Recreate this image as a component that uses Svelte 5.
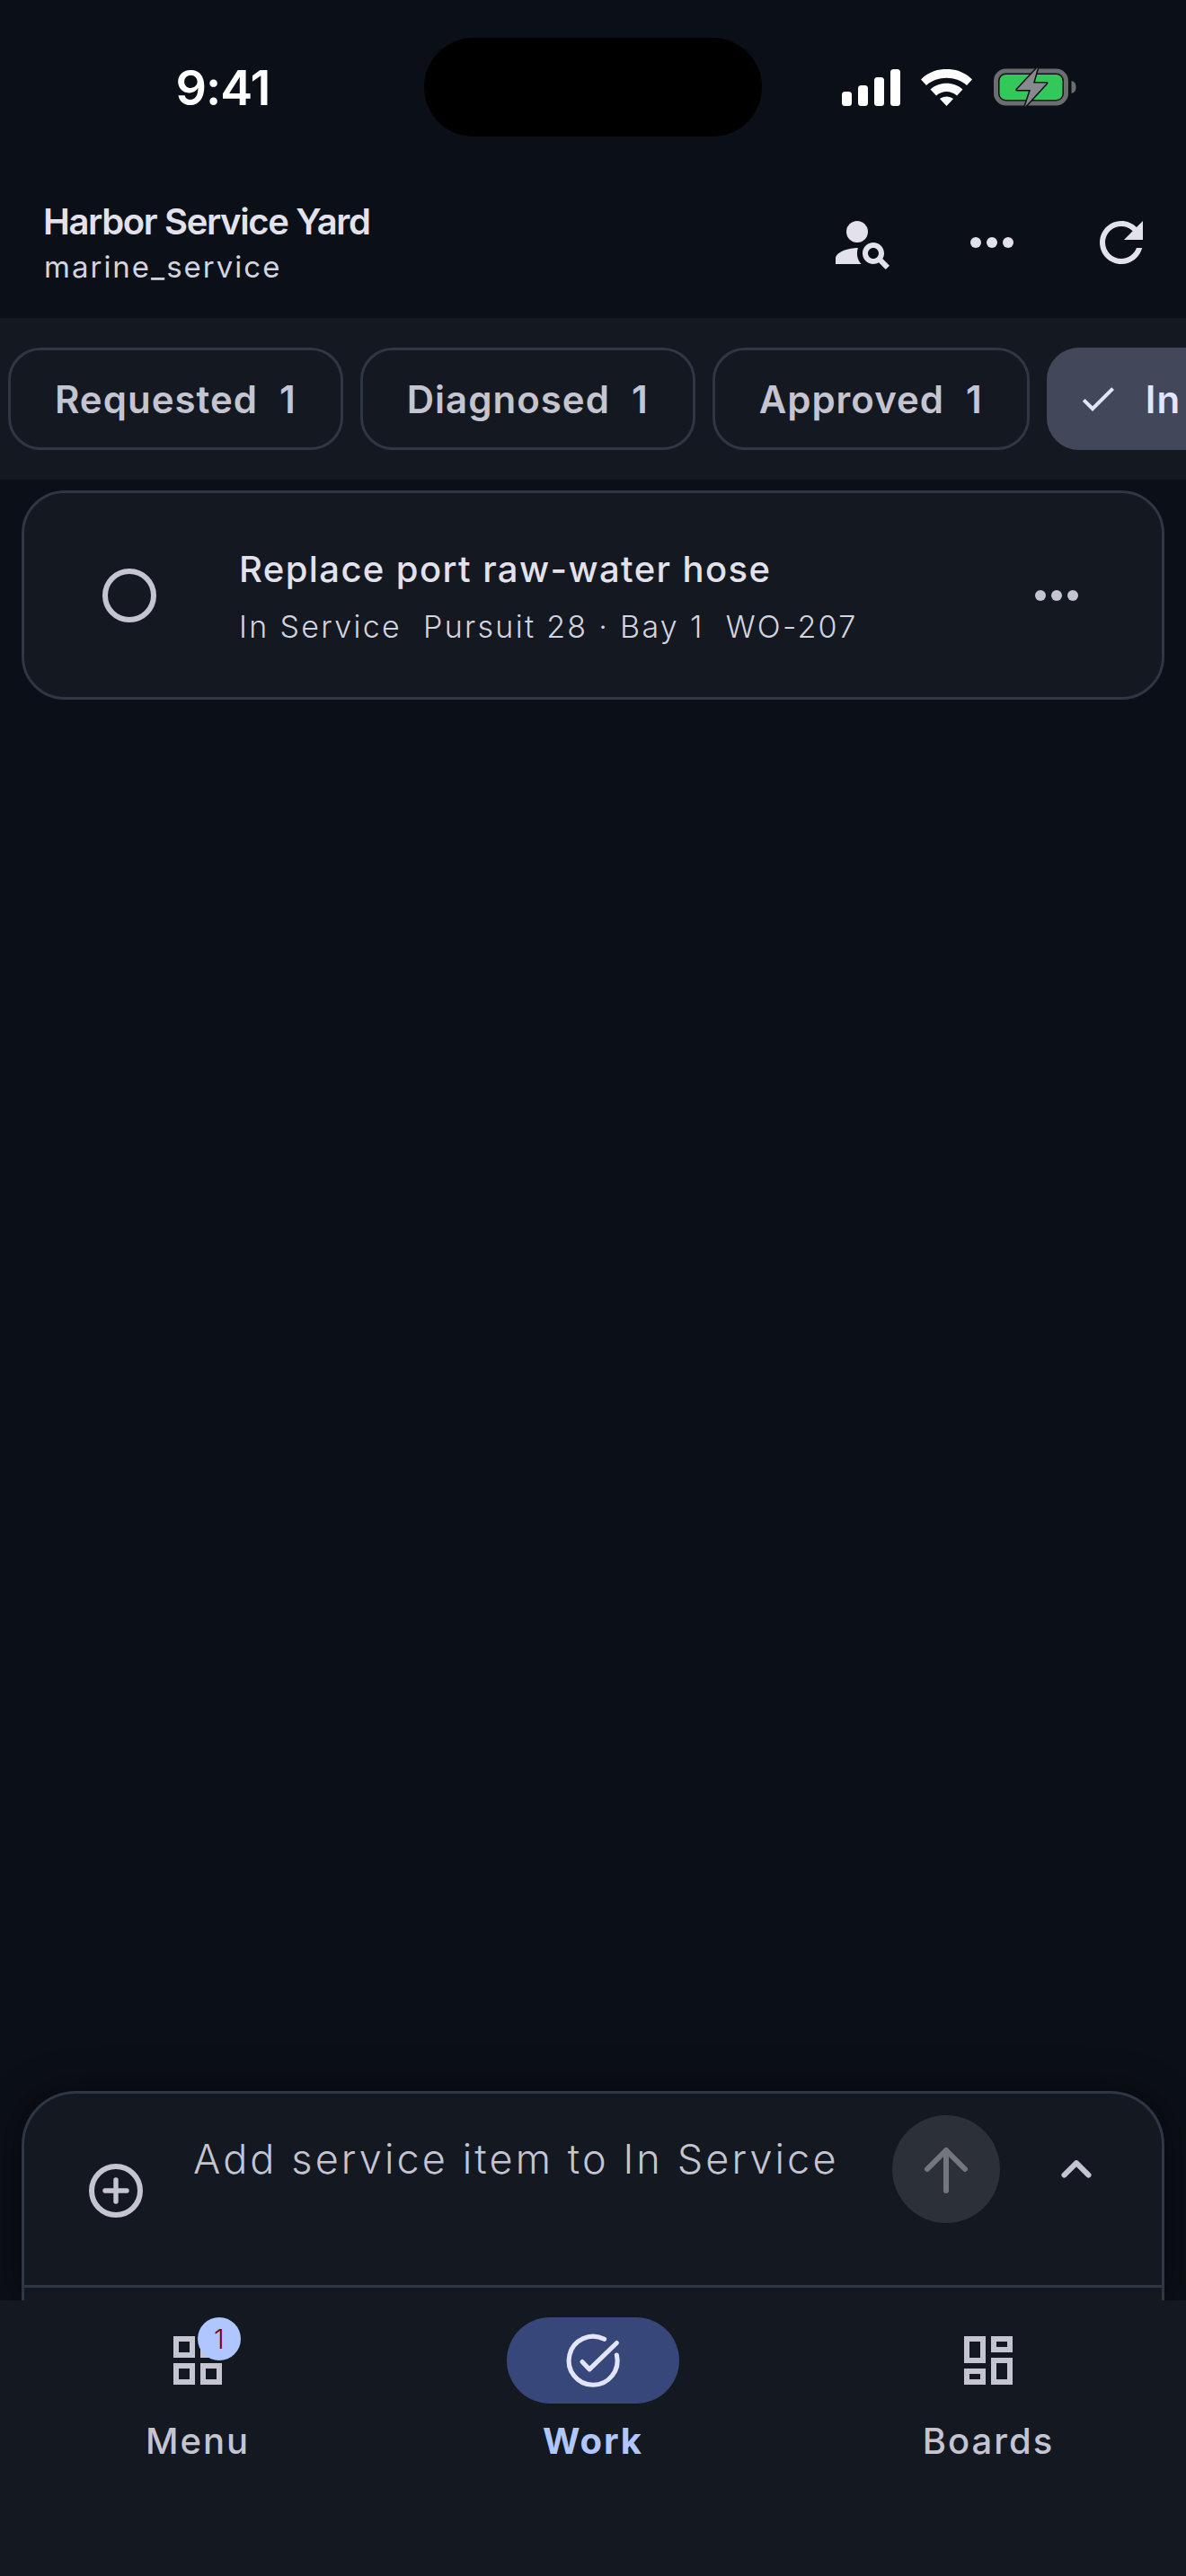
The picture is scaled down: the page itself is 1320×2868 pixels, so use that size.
<script>
  const tabs = [
    { label: 'Requested', count: 1 },
    { label: 'Diagnosed', count: 1 },
    { label: 'Approved', count: 1 },
    { label: 'In Service', count: 1, active: true }
  ];
</script>

<div class="page">
  <header class="top">
    <div class="status">
      <span class="time">9:41</span>
      <div class="island"></div>
      <div class="sys">
        <svg class="signal" width="65" height="41" viewBox="0 0 65 41" fill="#fff">
          <rect x="0" y="25" width="11" height="16" rx="3.5" />
          <rect x="18" y="18" width="11" height="23" rx="3.5" />
          <rect x="36" y="9" width="11" height="32" rx="3.5" />
          <rect x="54" y="0" width="11" height="41" rx="3.5" />
        </svg>
        <svg class="wifi" width="57" height="41" viewBox="0 0 57 41" fill="#fff">
          <path d="M0 11.5C15-4 42-4 57 11.5L51 18C39 7 18 7 6 18Z" />
          <path d="M10.5 22.5C20 13.5 37 13.5 46.5 22.5L40 29.5C33.5 23.5 23.5 23.5 17 29.5Z" />
          <path d="M21 33C25 29.5 32 29.5 36 33L28.5 41Z" />
        </svg>
        <svg class="battery" width="92" height="50" viewBox="0 0 92 50">
          <rect x="2.5" y="7" width="78" height="36" rx="11" fill="none" stroke="#6b6d71" stroke-width="5" />
          <rect x="6.500" y="11" width="70" height="28" rx="7" fill="#34c759" />
          <path d="M86.500 18c4 1 5 3.500 5 7s-1 6-5 7Z" fill="#6b6d71" />
          <path d="M49 3 25.700 28H41L34.700 47 59 20.500H44Z" fill="#88898c" stroke="#0b0f17" stroke-width="3" stroke-linejoin="round" paint-order="stroke" />
        </svg>
      </div>
    </div>
    <div class="appbar">
      <div class="titles">
        <div class="title">Harbor Service Yard</div>
        <div class="sub">marine_service</div>
      </div>
      <div class="actions">
        <button aria-label="Find person">
          <svg width="72" height="72" viewBox="0 0 24 24" fill="#e3e2ec">
            <circle cx="10" cy="8" r="4" />
            <path d="M10.350 14.010C7.620 13.910 2 15.270 2 18v2h9.540c-2.470-2.760-1.230-5.970-1.190-5.990z" />
            <path d="M19.430 18.020c.36-.59.57-1.280.57-2.020 0-2.210-1.790-4-4-4s-4 1.790-4 4 1.790 4 4 4c.74 0 1.430-.22 2.020-.57L20.590 22 22 20.590l-2.570-2.570zM16 18c-1.100 0-2-.9-2-2s.9-2 2-2 2 .9 2 2-.9 2-2 2z" />
          </svg>
        </button>
        <button aria-label="More">
          <svg width="72" height="72" viewBox="0 0 24 24" fill="#e3e2ec">
            <circle cx="6" cy="12" r="2" /><circle cx="12" cy="12" r="2" /><circle cx="18" cy="12" r="2" />
          </svg>
        </button>
        <button aria-label="Refresh">
          <svg width="72" height="72" viewBox="0 0 24 24" fill="#e3e2ec">
            <path d="M17.650 6.350C16.200 4.900 14.210 4 12 4c-4.420 0-7.990 3.580-7.990 8s3.570 8 7.990 8c3.730 0 6.840-2.550 7.730-6h-2.080c-.82 2.330-3.040 4-5.650 4-3.310 0-6-2.690-6-6s2.690-6 6-6c1.660 0 3.140.69 4.220 1.780L13 11h7V4l-2.350 2.350z" />
          </svg>
        </button>
      </div>
    </div>
  </header>

  <nav class="tabs">
    {#each tabs as t}
      <div class="tab" class:active={t.active}>
        {#if t.active}
          <svg class="check" width="48" height="48" viewBox="0 0 24 24" fill="#e3e5ff">
            <path d="M9 16.170 4.830 12l-1.420 1.410L9 19 21 7l-1.410-1.410z" />
          </svg>
        {/if}
        <span>{t.label}</span><span class="count">{t.count}</span>
      </div>
    {/each}
  </nav>

  <main class="list">
    <article class="card">
      <div class="radio"></div>
      <div class="body">
        <div class="ctitle">Replace port raw-water hose</div>
        <div class="meta"><span>In Service</span><span>Pursuit 28 · Bay 1</span><span>WO-207</span></div>
      </div>
      <svg class="cmore" width="72" height="72" viewBox="0 0 24 24" fill="#c5c4d1">
        <circle cx="6" cy="12" r="2" /><circle cx="12" cy="12" r="2" /><circle cx="18" cy="12" r="2" />
      </svg>
    </article>
  </main>

  <section class="composer">
    <div class="input">
      <svg class="plus" width="72" height="72" viewBox="0 0 24 24" fill="none" stroke="#c5c4d1" stroke-width="2" stroke-linecap="round">
        <circle cx="12" cy="12" r="9" />
        <path d="M12 8v8M8 12h8" stroke-width="1.800" />
      </svg>
      <div class="placeholder">Add service item to In Service</div>
      <button class="send" aria-label="Send">
        <svg width="72" height="72" viewBox="0 0 24 24" fill="none" stroke="#73767d" stroke-width="2" stroke-linecap="round" stroke-linejoin="round">
          <path d="M12 20V5M5 12l7-7 7 7" />
        </svg>
      </button>
      <svg class="chev" width="72" height="72" viewBox="0 0 24 24" fill="none" stroke="#c5c4d1" stroke-width="2" stroke-linecap="round" stroke-linejoin="round">
        <path d="M7.500 14.200 12 9.700l4.500 4.500" />
      </svg>
    </div>
    <div class="rest"></div>
  </section>

  <footer class="nav">
    <div class="item">
      <div class="ic">
        <svg width="72" height="72" viewBox="0 0 24 24" fill="#c5c4d1">
          <path d="M3 3v8h8V3H3zm6 6H5V5h4v4zm-6 4v8h8v-8H3zm6 6H5v-4h4v4zm4-16v8h8V3h-8zm6 6h-4V5h4v4zm-6 4v8h8v-8h-8zm6 6h-4v-4h4v4z" />
        </svg>
        <span class="badge">1</span>
      </div>
      <span class="lbl">Menu</span>
    </div>
    <div class="item on">
      <div class="ic">
        <svg width="72" height="72" viewBox="0 0 24 24" fill="none" stroke="#e3e5ff" stroke-width="1.700" stroke-linecap="round" stroke-linejoin="round">
          <path d="M16.200 4.100A9 9 0 1 0 20.800 10" />
          <path d="M20.800 5.500 10.700 15.300 8 12.500" />
        </svg>
      </div>
      <span class="lbl">Work</span>
    </div>
    <div class="item">
      <div class="ic">
        <svg width="72" height="72" viewBox="0 0 24 24" fill="#c5c4d1">
          <path d="M19 5v2h-4V5h4M9 5v6H5V5h4m10 8v6h-4v-6h4M9 17v2H5v-2h4M21 3h-8v6h8V3zM11 3H3v10h8V3zm10 8h-8v10h8V11zm-10 4H3v6h8v-6z" />
        </svg>
      </div>
      <span class="lbl">Boards</span>
    </div>
  </footer>
</div>

<style>
  :global(body) {
    margin: 0;
    background: #0b0f17;
  }
  .page {
    width: 1320px;
    height: 2868px;
    display: flex;
    flex-direction: column;
    overflow: hidden;
    background: #0b0f17;
    font-family: Inter, "Noto Sans", sans-serif;
    color: #e3e2ec;
  }
  button {
    background: none;
    border: 0;
    padding: 0;
    display: flex;
    align-items: center;
    justify-content: center;
  }
  .status {
    height: 198px;
    box-sizing: border-box;
    padding-top: 42px;
    display: flex;
    align-items: flex-start;
    justify-content: space-between;
    position: relative;
  }
  .time {
    width: 472px;
    box-sizing: border-box;
    padding-left: 24px;
    text-align: center;
    height: 110px;
    line-height: 112px;
    font-size: 54px;
    font-weight: 600;
    color: #fff;
    letter-spacing: -1px;
  }
  .island {
    width: 376px;
    height: 110px;
    border-radius: 55px;
    background: #000;
  }
  .sys {
    width: 472px;
    box-sizing: border-box;
    padding-left: 89px;
    height: 110px;
    display: flex;
    align-items: center;
    gap: 23px;
    position: relative;
  }
  .battery { margin-left: 1px; }
  .appbar {
    height: 144px;
    display: flex;
    align-items: center;
    justify-content: space-between;
    padding-left: 48px;
  }
  .title {
    font-size: 40px;
    font-weight: 600;
    letter-spacing: -1.370px;
    line-height: 48px;
  }
  .sub {
    font-size: 33px;
    font-weight: 400;
    letter-spacing: 2px;
    line-height: 42px;
    color: #d4d3df;
    margin-top: 5px;
    margin-left: 1px;
  }
  .actions {
    display: flex;
  }
  .actions button {
    width: 144px;
    height: 144px;
  }
  .tabs {
    margin-top: 12px;
    height: 180px;
    background: #131821;
    display: flex;
    align-items: center;
    gap: 19px;
    padding-left: 9px;
    overflow: hidden;
  }
  .tab {
    flex: none;
    height: 114px;
    box-sizing: border-box;
    border: 3px solid #2f3644;
    border-radius: 36px;
    padding: 0 49px;
    display: flex;
    align-items: center;
    font-size: 42px;
    font-weight: 600;
    letter-spacing: 1px;
    color: #c5c4d1;
  }
  .count {
    margin-left: 24px;
  }
  .tab.active {
    background: #424859;
    border-color: #424859;
    color: #e3e5ff;
    padding-left: 30px;
  }
  .check {
    margin-right: 29px;
  }
  .list {
    flex: 1;
    padding: 12px 24px;
    min-height: 0;
  }
  .card {
    height: 233px;
    box-sizing: border-box;
    border: 3px solid #2f3644;
    border-radius: 48px;
    background: #131821;
    display: flex;
    align-items: center;
    position: relative;
  }
  .radio {
    width: 60px;
    height: 60px;
    box-sizing: border-box;
    border: 6px solid #c5c4d1;
    border-radius: 50%;
    margin-left: 87px;
    flex: none;
  }
  .body {
    margin-left: 92px;
    padding-top: 2px;
    flex: 1;
  }
  .ctitle {
    font-size: 40px;
    font-weight: 500;
    letter-spacing: 1.400px;
    line-height: 54px;
    color: #e3e2ec;
  }
  .meta {
    margin-top: 15px;
    display: flex;
    gap: 24px;
    font-size: 34px;
    letter-spacing: 2.300px;
    line-height: 44px;
    color: #d4d3df;
    font-weight: 300;
  }
  .cmore {
    margin-right: 81px;
    flex: none;
  }
  .composer {
    margin: 0 24px;
    height: 233px;
    box-sizing: border-box;
    border: 3px solid #2f3644;
    border-bottom: 0;
    border-radius: 60px 60px 0 0;
    background: #131821;
    box-shadow: 0 0 45px rgba(0, 0, 0, 0.45);
    display: flex;
    flex-direction: column;
    flex: none;
  }
  .input {
    height: 216px;
    box-sizing: border-box;
    border-bottom: 3px solid #2f3644;
    position: relative;
    display: flex;
    align-items: flex-start;
  }
  .plus {
    margin: 72px 0 0 66px;
    flex: none;
  }
  .placeholder {
    margin: 43px 0 0 50px;
    width: 780px;
    font-size: 45px;
    font-weight: 300;
    line-height: 60px;
    letter-spacing: 3.100px;
    color: #c5c4d1;
    flex: none;
    white-space: nowrap;
  }
  .send {
    position: absolute;
    left: 966px;
    top: 24px;
    width: 120px;
    height: 120px;
    border-radius: 50%;
    background: #2c3038;
  }
  .chev {
    position: absolute;
    left: 1134.500px;
    top: 48px;
  }
  .nav {
    flex: none;
    height: 307px;
    background: #131821;
    display: grid;
    grid-template-columns: repeat(3, 1fr);
    position: relative;
  }
  .item {
    display: flex;
    flex-direction: column;
    align-items: center;
    padding-top: 19px;
  }
  .ic {
    width: 192px;
    height: 96px;
    border-radius: 48px;
    display: flex;
    align-items: center;
    justify-content: center;
    position: relative;
  }
  .on .ic {
    background: #38477a;
  }
  .badge {
    position: absolute;
    left: 96px;
    top: 0;
    width: 48px;
    height: 48px;
    border-radius: 50%;
    background: #b0c6ff;
    color: #7d0008;
    font-size: 30px;
    line-height: 48px;
    text-align: center;
    font-weight: 300;
  }
  .lbl {
    margin-top: 15px;
    font-size: 40px;
    line-height: 54px;
    font-weight: 500;
    letter-spacing: 2px;
    color: #c5c4d1;
  }
  .on .lbl {
    color: #b0c6ff;
    font-weight: 700;
  }
</style>
